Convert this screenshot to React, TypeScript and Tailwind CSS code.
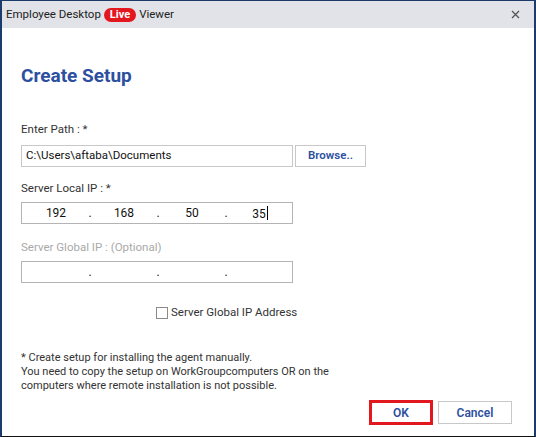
import React from 'react';

function IpBox({ parts }: { parts: string[] }) {
  const items: string[] = [];
  parts.forEach((p, i) => {
    items.push(p);
    if (i < 3) items.push('.');
  });
  return (
    <div className="flex h-[22px] w-[272px] items-center border border-[#b4b4b4] bg-white pl-[17px] text-[12px] text-[#111]">
      {items.map((p, i) => (
        <span key={i} className="w-[34px] text-center">
          {p}
          {i === 6 && p && <span className="ml-[1px] inline-block h-[14px] w-px translate-y-[2px] bg-black" />}
        </span>
      ))}
    </div>
  );
}

export default function App() {
  return (
    <div
      className="flex h-[437px] w-[536px] flex-col border-x-2 border-t border-b border-x-[#1c3b6d] border-t-[#1c3b6d] border-b-[#111] bg-white text-[12px] text-[#333]"
      style={{ fontFamily: 'Roboto, "Open Sans", sans-serif' }}
    >
      <div className="flex h-[27px] shrink-0 items-center bg-[#e1e3e8] pl-[4px] pr-[14px] text-[11.5px] text-[#222]">
        <span>Employee Desktop</span>
        <span className="mx-[3px] rounded-full bg-[#e3181f] px-[6px] text-[11px] font-bold leading-[14px] text-white">Live</span>
        <span>Viewer</span>
        <span className="ml-auto">
          <svg width="9" height="9" viewBox="0 0 9 9" className="text-[#555]">
            <path d="M1 1 L8 8 M8 1 L1 8" stroke="currentColor" strokeWidth="1.3" />
          </svg>
        </span>
      </div>

      <div className="flex flex-1 flex-col pl-[19px] pr-[22px]">
        <h1 className="mt-[36px] text-[19px] font-bold leading-[24px] text-[#2d4f9f]">Create Setup</h1>

        <div className="mt-[33px] text-[11.5px] leading-[16px]">Enter Path : *</div>
        <div className="mt-[8px] flex h-[22px] gap-[2px]">
          <div className="flex w-[272px] items-center border border-[#c8c8c8] px-[4px] text-[11.5px] text-[#111]">
            C:\Users\aftaba\Documents
          </div>
          <div className="flex w-[71px] items-center justify-center border border-[#c8c8c8] text-[11.5px] font-semibold text-[#2d4f9f]">
            Browse..
          </div>
        </div>

        <div className="mt-[13px] text-[11.5px] leading-[16px]">Server Local IP : *</div>
        <div className="mt-[6px]">
          <IpBox parts={['192', '168', '50', '35']} />
        </div>

        <div className="mt-[15px] text-[11.5px] leading-[16px] text-[#a9a9a9]">Server Global IP : (Optional)</div>
        <div className="mt-[6px]">
          <IpBox parts={['', '', '', '']} />
        </div>

        <div className="mt-[21px] flex items-center pl-[135px] text-[11.5px] text-[#333]">
          <span className="mr-[3px] inline-block h-[12px] w-[12px] border border-[#8a8a8a] bg-white" />
          Server Global IP Address
        </div>

        <div className="mt-[30px] text-[11px] leading-[14px] text-[#333]">
          <div>* Create setup for installing the agent manually.</div>
          <div>You need to copy the setup on WorkGroupcomputers OR on the</div>
          <div>computers where remote installation is not possible.</div>
        </div>

        <div className="mt-[7px] flex justify-end gap-[5px]">
          <button className="h-[25px] w-[64px] border-[3px] border-[#e3181f] bg-white text-[12px] font-semibold text-[#2d4f9f]">
            OK
          </button>
          <button className="mt-[1px] h-[23px] w-[74px] border border-[#c8c8c8] bg-white text-[12px] font-semibold text-[#2d4f9f]">
            Cancel
          </button>
        </div>
      </div>
    </div>
  );
}
